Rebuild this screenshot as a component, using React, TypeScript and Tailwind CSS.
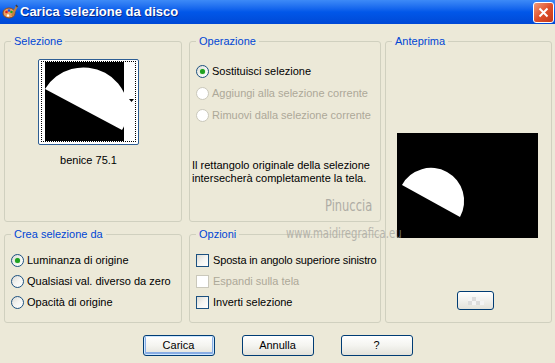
import React from 'react';

const Radio = ({ checked = false, disabled = false }: { checked?: boolean; disabled?: boolean }) => (
  <span
    className={`relative w-[13px] h-[13px] rounded-full border flex-shrink-0 flex items-center justify-center ${
      disabled
        ? 'border-[#CAC8BB] bg-white'
        : 'border-[#1C5180] bg-gradient-to-br from-[#DCDBD5] via-[#F4F4F1] to-white'
    }`}
  >
    {checked && <span className="w-[5px] h-[5px] rounded-full bg-[#21A121] shadow-[0_0_1px_#5FD35F]" />}
  </span>
);

const Check = ({ disabled = false }: { disabled?: boolean }) => (
  <span
    className={`w-[13px] h-[13px] border flex-shrink-0 ${
      disabled
        ? 'border-[#CAC8BB] bg-white'
        : 'border-[#1C5180] bg-gradient-to-br from-[#DCDBD5] via-[#F4F4F1] to-white'
    }`}
  />
);

const Group = ({ title, className, children }: { title: string; className: string; children?: React.ReactNode }) => (
  <fieldset className={`border border-[#D0D0BF] rounded-[3px] ${className}`}>
    <legend className="ml-[6px] px-[3px] text-[#0046D5] leading-[14px]">{title}</legend>
    {children}
  </fieldset>
);

const XpButton = ({ label, focused = false }: { label: string; focused?: boolean }) => (
  <button
    className={`w-[72px] h-[21px] rounded-[3px] border border-[#003C74] bg-gradient-to-b from-white via-[#F4F4F0] to-[#E3E2DA] text-black leading-none ${
      focused ? 'shadow-[inset_0_0_0_1px_#CEE7FF,inset_0_-1px_0_2px_#89ADE4]' : ''
    }`}
  >
    {label}
  </button>
);

export default function App() {
  return (
    <div className="relative w-[555px] h-[363px] overflow-hidden bg-[#ECE9D8] text-[11px] text-black whitespace-nowrap font-['Liberation_Sans',Arial,sans-serif]">
      {/* title bar */}
      <div className="h-[24px] flex items-center bg-gradient-to-b from-[#3D8AF7] via-[#0157E9] to-[#0049D6]">
        <svg width="16" height="16" viewBox="0 0 16 16" className="ml-[2px]">
          <ellipse cx="7" cy="9" rx="6" ry="5" fill="#E8A060" stroke="#8A4A20" strokeWidth="1" />
          <circle cx="4.5" cy="8" r="1.3" fill="#E02020" />
          <circle cx="7" cy="6.5" r="1.3" fill="#2050E0" />
          <circle cx="9.5" cy="8" r="1.3" fill="#20A020" />
          <circle cx="6" cy="11.5" r="1.2" fill="#FFFFFF" />
          <path d="M10 12 L15 2" stroke="#C08040" strokeWidth="2" />
          <path d="M14 1 L15.5 3" stroke="#404040" strokeWidth="1.5" />
        </svg>
        <span className="ml-[2px] text-white font-bold text-[13px] [text-shadow:1px_1px_0_#0A2A88]">
          Carica selezione da disco
        </span>
        <div className="ml-auto mr-[1px] w-[21px] h-[21px] rounded-[3px] border border-white bg-gradient-to-br from-[#F09878] via-[#E0502A] to-[#C2381A] flex items-center justify-center">
          <svg width="11" height="11" viewBox="0 0 11 11">
            <path d="M1.5 1.5 L9.5 9.5 M9.5 1.5 L1.5 9.5" stroke="white" strokeWidth="2" />
          </svg>
        </div>
      </div>

      {/* body */}
      <div className="flex pt-[10px] pl-[4px]">
        <div className="flex flex-col gap-[5px] w-[178px]">
          <Group title="Selezione" className="h-[188px]">
            <div className="ml-[33px] mt-[11px] w-[101px] flex flex-col items-center">
              <div className="w-[101px] h-[86px] border border-[#2E5E93] rounded-[2px] bg-white pt-[1px] px-[2px] pb-[2px]">
                <div className="h-full border border-dotted border-black flex pl-[3px]">
                  <svg width="79" height="79" viewBox="0 0 79 79" className="bg-black block">
                    <path d="M0 27 A42 40 0 0 1 77 68 Z" fill="white" />
                  </svg>
                  <div className="flex-1 flex items-center justify-end pr-[1px] pb-[2px]">
                    <svg width="5" height="3" viewBox="0 0 5 3">
                      <path d="M0 0 L5 0 L2.5 3 Z" fill="black" />
                    </svg>
                  </div>
                </div>
              </div>
              <div className="mt-[9px] leading-[13px]">benice 75.1</div>
            </div>
          </Group>
          <Group title="Crea selezione da" className="h-[96px]">
            <div className="mt-[9px] pl-[6px] flex flex-col">
              <label className="h-[21px] flex items-center gap-[3px]">
                <Radio checked />
                <span>Luminanza di origine</span>
              </label>
              <label className="h-[21px] flex items-center gap-[3px]">
                <Radio />
                <span>Qualsiasi val. diverso da zero</span>
              </label>
              <label className="h-[21px] flex items-center gap-[3px]">
                <Radio />
                <span>Opacità di origine</span>
              </label>
            </div>
          </Group>
        </div>

        <div className="ml-[7px] flex flex-col gap-[5px] w-[192px]">
          <Group title="Operazione" className="h-[188px]">
            <div className="mt-[12px] pl-[6px] flex flex-col">
              <label className="h-[22px] flex items-center gap-[3px]">
                <Radio checked />
                <span>Sostituisci selezione</span>
              </label>
              <label className="h-[22px] flex items-center gap-[3px] text-[#ACA899]">
                <Radio disabled />
                <span>Aggiungi alla selezione corrente</span>
              </label>
              <label className="h-[22px] flex items-center gap-[3px] text-[#ACA899]">
                <Radio disabled />
                <span>Rimuovi dalla selezione corrente</span>
              </label>
            </div>
            <p className="mt-[33px] pl-[2px] leading-[13px]">
              Il rettangolo originale della selezione
              <br />
              intersecherà completamente la tela.
            </p>
          </Group>
          <Group title="Opzioni" className="h-[96px]">
            <div className="mt-[9px] pl-[6px] flex flex-col">
              <label className="h-[21px] flex items-center gap-[4px]">
                <Check />
                <span className="tracking-[-0.15px]">Sposta in angolo superiore sinistro</span>
              </label>
              <label className="h-[21px] flex items-center gap-[4px] text-[#ACA899]">
                <Check disabled />
                <span>Espandi sulla tela</span>
              </label>
              <label className="h-[21px] flex items-center gap-[4px]">
                <Check />
                <span>Inverti selezione</span>
              </label>
            </div>
          </Group>
        </div>

        <Group title="Anteprima" className="ml-[4px] w-[167px] h-[289px]">
          <svg width="141" height="105" viewBox="0 0 141 105" className="ml-[11px] mt-[85px] block bg-black">
            <path d="M5 52 A33 33 0 0 1 63 84 Z" fill="white" />
          </svg>
          <button className="ml-[71px] mt-[53px] w-[37px] h-[19px] rounded-[3px] border border-[#003C74] bg-gradient-to-b from-white to-[#E3E2DA] flex items-center justify-center">
            <svg width="16" height="8" viewBox="0 0 16 8">
              <rect x="0" y="0" width="4" height="4" fill="#F4F4F4" />
              <rect x="8" y="0" width="4" height="4" fill="#F4F4F4" />
              <rect x="4" y="4" width="4" height="4" fill="#F4F4F4" />
              <rect x="12" y="4" width="4" height="4" fill="#F4F4F4" />
              <rect x="4" y="0" width="4" height="4" fill="#DCDCDC" />
              <rect x="0" y="4" width="4" height="4" fill="#DCDCDC" />
              <rect x="8" y="4" width="4" height="4" fill="#DCDCDC" />
            </svg>
          </button>
        </Group>
      </div>

      {/* buttons */}
      <div className="mt-[12px] flex justify-center gap-[27px]">
        <XpButton label="Carica" focused />
        <XpButton label="Annulla" />
        <XpButton label="?" />
      </div>

      {/* watermark */}
      <span className="absolute left-[325px] top-[199px] text-[15px] leading-none text-[#A09E98] font-['DejaVu_Sans_Condensed','DejaVu_Sans',sans-serif] [font-stretch:condensed] origin-left scale-x-[0.85] opacity-80">
        Pinuccia
      </span>
      <span className="absolute left-[286px] top-[226px] text-[14px] leading-none text-[#A09E98] font-['DejaVu_Sans_Condensed','DejaVu_Sans',sans-serif] [font-stretch:condensed] origin-left scale-x-[0.8] opacity-70">
        www.maidiregrafica.eu
      </span>
    </div>
  );
}
